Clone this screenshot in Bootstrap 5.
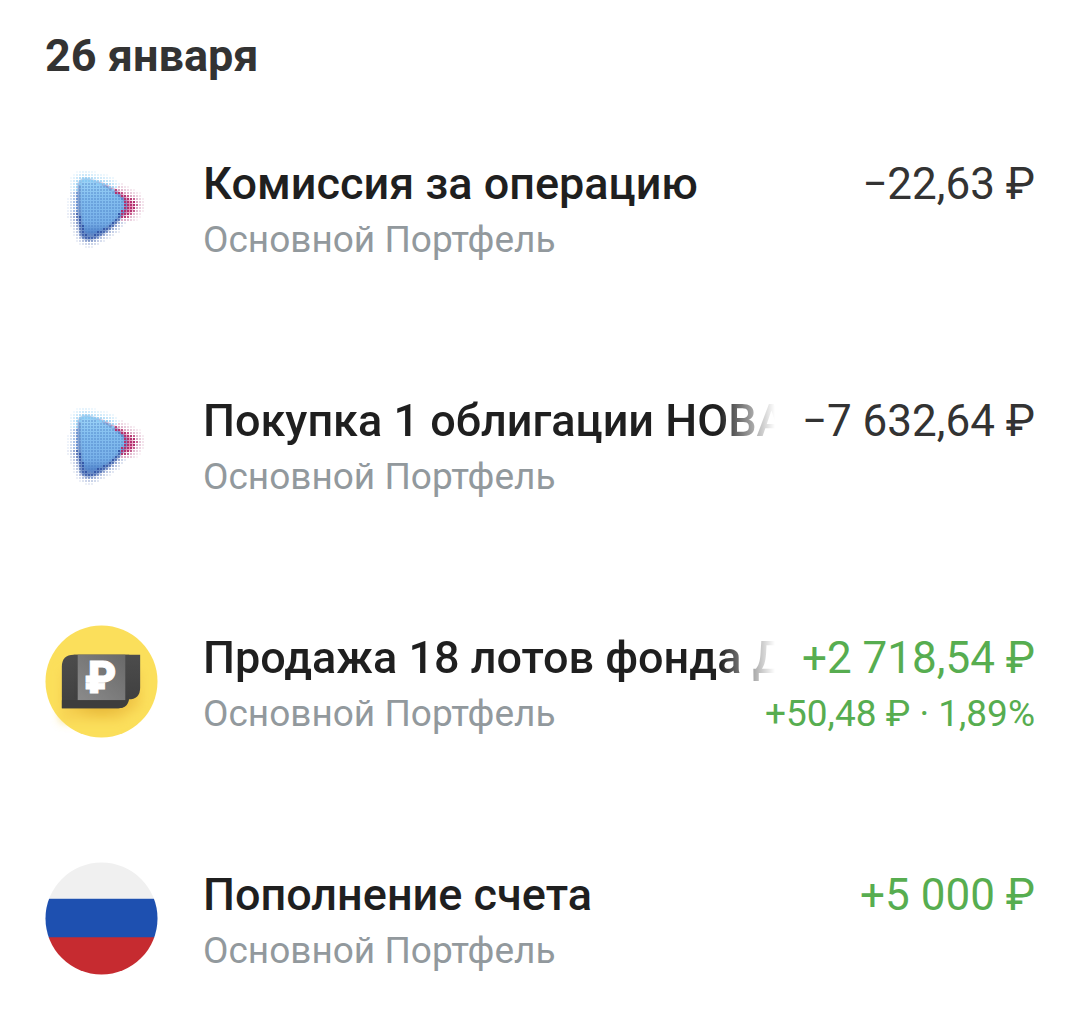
<!DOCTYPE html>
<html lang="ru">
<head>
<meta charset="utf-8">
<meta name="viewport" content="width=device-width, initial-scale=1">
<title>Операции</title>
<link href="https://cdn.jsdelivr.net/npm/bootstrap@5.3.0/dist/css/bootstrap.min.css" rel="stylesheet">
<style>
  body { font-family: Roboto, "Liberation Sans", sans-serif; background: #fff; color: #333; overflow-x: hidden; }
  .feed { padding: 28px 45px 0; }
  .feed-date { font-size: 45px; line-height: 56px; font-weight: 700; color: #333; margin-bottom: 67px; }
  .op { gap: 45px; margin-bottom: 120px; }
  .op:last-child { margin-bottom: 0; padding-bottom: 48px; }
  .op-icon { width: 113px; height: 113px; }
  .op-text { padding-top: 5px; }
  .op-line { gap: 27px; font-size: 44px; line-height: 56px; }
  .op-name { font-size: 45px; line-height: 56px; font-weight: 500; color: #1f1f1f; min-width: 0; }
  .op-name-fade { -webkit-mask-image: linear-gradient(to left, transparent, #000 56px); mask-image: linear-gradient(to left, transparent, #000 56px); }
  .op-sub { font-size: 37px; line-height: 56px; color: #92999d; }
  .gain { color: #57ad50; }
</style>
<script src="https://cdn.jsdelivr.net/npm/bootstrap@5.3.0/dist/js/bootstrap.bundle.min.js" defer></script>
</head>
<body>
<svg width="0" height="0" class="position-absolute" aria-hidden="true">
  <defs>
    <linearGradient id="sail" x1="0" y1="0" x2="0" y2="1">
      <stop offset="0" stop-color="#a0d6f8"/><stop offset=".35" stop-color="#84bff0"/><stop offset=".8" stop-color="#78b0e8"/><stop offset="1" stop-color="#4f80c8"/>
    </linearGradient>
    <filter id="soft" x="-20%" y="-20%" width="140%" height="140%"><feGaussianBlur stdDeviation="1.3"/></filter>
    <symbol id="play" viewBox="0 0 113 113">
      <path d="M52 31 Q72 37 84 48 Q92 55 86 62 L76 66Z" fill="#d4588e" opacity=".6" filter="url(#soft)"/>
      <path d="M33 34 Q34 27 43 28 Q64 33 79 47 Q86 54 79 63 Q68 78 52 87 Q39 92 35 84 Q31 60 33 34Z" fill="#3f69b4" opacity=".75" filter="url(#soft)"/>
      <path d="M35 32 Q36 26 44 28 Q64 34 78 48 Q84 55 78 61 Q66 75 52 82 Q41 86 38 78 Q34 57 35 32Z" fill="url(#sail)" filter="url(#soft)"/>
      <g id="dots"></g>
    </symbol>
  </defs>
</svg>

<main class="feed">
  <h1 class="feed-date">26 января</h1>
  <ul class="list-unstyled mb-0">
    <li class="op d-flex">
      <svg class="op-icon flex-shrink-0" aria-hidden="true"><use href="#play"/></svg>
      <div class="op-text flex-grow-1 overflow-hidden">
        <div class="op-line d-flex justify-content-between">
          <h2 class="op-name mb-0 text-nowrap overflow-hidden">Комиссия за операцию</h2>
          <span class="text-nowrap">−22,63 ₽</span>
        </div>
        <div class="op-sub">Основной Портфель</div>
      </div>
    </li>
    <li class="op d-flex">
      <svg class="op-icon flex-shrink-0" aria-hidden="true"><use href="#play"/></svg>
      <div class="op-text flex-grow-1 overflow-hidden">
        <div class="op-line d-flex justify-content-between">
          <h2 class="op-name op-name-fade mb-0 text-nowrap overflow-hidden flex-grow-1">Покупка 1 облигации НОВА</h2>
          <span class="text-nowrap">−7 632,64 ₽</span>
        </div>
        <div class="op-sub">Основной Портфель</div>
      </div>
    </li>
    <li class="op d-flex">
      <svg class="op-icon flex-shrink-0" viewBox="0 0 114 114" aria-hidden="true">
        <defs>
          <radialGradient id="gold" cx=".5" cy=".5" r=".5"><stop offset="0" stop-color="#d9a92e"/><stop offset=".6" stop-color="#ecc03f"/><stop offset="1" stop-color="#f7d353"/></radialGradient>
          <linearGradient id="pane" x1="1" y1="0" x2="0" y2="1"><stop offset="0" stop-color="#696969"/><stop offset="1" stop-color="#8b8b8b"/></linearGradient>
          <linearGradient id="note" x1="0" y1="0" x2="0" y2="1"><stop offset="0" stop-color="#4c4c4c"/><stop offset="1" stop-color="#404040"/></linearGradient>
          <filter id="shade" x="-20%" y="-20%" width="140%" height="150%"><feGaussianBlur stdDeviation="5"/></filter>
        </defs>
        <circle cx="57" cy="57" r="56.5" fill="#fbdf5b"/>
        <path d="M16 46 H98 V78 Q96 88 84 90 L78 97 H16Z" fill="url(#gold)" filter="url(#shade)"/>
        <path d="M17 42 Q17 30 29 30 H85 V72 Q85 84 74 84 H17Z" fill="url(#note)"/>
        <path d="M29 30 H96 V63 Q96 75 84 75 H29Z" fill="url(#note)"/>
        <path d="M33 30 H81 V76 H33Z" fill="url(#pane)"/>
        <path d="M17 76 H84 Q82 84 74 84 H17Z" fill="#3d3d3d"/>
        <text x="56" y="69" text-anchor="middle" font-family="Roboto" font-weight="900" font-size="44" fill="#fff" stroke="#fff" stroke-width="1">₽</text>
      </svg>
      <div class="op-text flex-grow-1 overflow-hidden">
        <div class="op-line d-flex justify-content-between">
          <h2 class="op-name op-name-fade mb-0 text-nowrap overflow-hidden flex-grow-1">Продажа 18 лотов фонда Д</h2>
          <span class="gain text-nowrap">+2 718,54 ₽</span>
        </div>
        <div class="op-sub d-flex justify-content-between">
          <span>Основной Портфель</span>
          <span class="gain text-nowrap">+50,48 ₽ · 1,89%</span>
        </div>
      </div>
    </li>
    <li class="op d-flex">
      <svg class="op-icon flex-shrink-0" viewBox="0 0 114 114" aria-hidden="true">
        <clipPath id="disc"><circle cx="57" cy="57" r="56.5"/></clipPath>
        <g clip-path="url(#disc)">
          <path d="M0 0H114V37H0Z" fill="#f0f0f0"/>
          <path d="M0 37H114V77H0Z" fill="#1e50b0"/>
          <path d="M0 76H114V114H0Z" fill="#c62b30"/>
        </g>
      </svg>
      <div class="op-text flex-grow-1 overflow-hidden">
        <div class="op-line d-flex justify-content-between">
          <h2 class="op-name mb-0 text-nowrap overflow-hidden">Пополнение счета</h2>
          <span class="gain text-nowrap">+5 000 ₽</span>
        </div>
        <div class="op-sub">Основной Портфель</div>
      </div>
    </li>
  </ul>
</main>
<script>
  // Halftone dots: size falls off with distance from the triangle's edge
  const NS = 'http://www.w3.org/2000/svg';
  const edgeDistance = (x, y, pts) => {
    let outer = 1e9, inside = true;
    pts.forEach(([ax, ay], i) => {
      const [bx, by] = pts[(i + 1) % pts.length];
      const dx = bx - ax, dy = by - ay;
      const t = Math.max(0, Math.min(1, ((x - ax) * dx + (y - ay) * dy) / (dx * dx + dy * dy)));
      outer = Math.min(outer, Math.hypot(x - ax - t * dx, y - ay - t * dy));
      if (dx * (y - ay) - dy * (x - ax) < 0) inside = false;
    });
    return inside ? -outer : outer;
  };
  const blue = [[40, 35], [60, 40], [74, 53], [63, 69], [45, 80], [39, 62]];
  const pink = [[58, 40], [84, 54], [78, 60]];
  const g = document.getElementById('dots');
  const step = 3;
  for (let y = 15; y < 100; y += step) {
    for (let x = 20; x < 101; x += step) {
      const b = edgeDistance(x, y, blue), p = edgeDistance(x, y, pink);
      const isPink = p < b - 1 && b > 6 && y < 72 && x > 56;
      const d = isPink ? p : b;
      const size = b < 5 ? 1.2 : 2.1 - Math.max(0, d - 5) * .13;
      if (size < .6) continue;
      let fill = '#4377be';
      if (isPink) fill = d > 8 ? '#c67ba4' : '#b3306e';
      else if (b > 5) fill = y > 60 ? '#3558a8' : (y < 40 ? '#86c8f2' : '#5a86cc');
      const r = document.createElementNS(NS, 'rect');
      r.setAttribute('x', x - size / 2); r.setAttribute('y', y - size / 2);
      r.setAttribute('width', size); r.setAttribute('height', size);
      r.setAttribute('fill', fill);
      g.appendChild(r);
    }
  }
</script>
</body>
</html>
